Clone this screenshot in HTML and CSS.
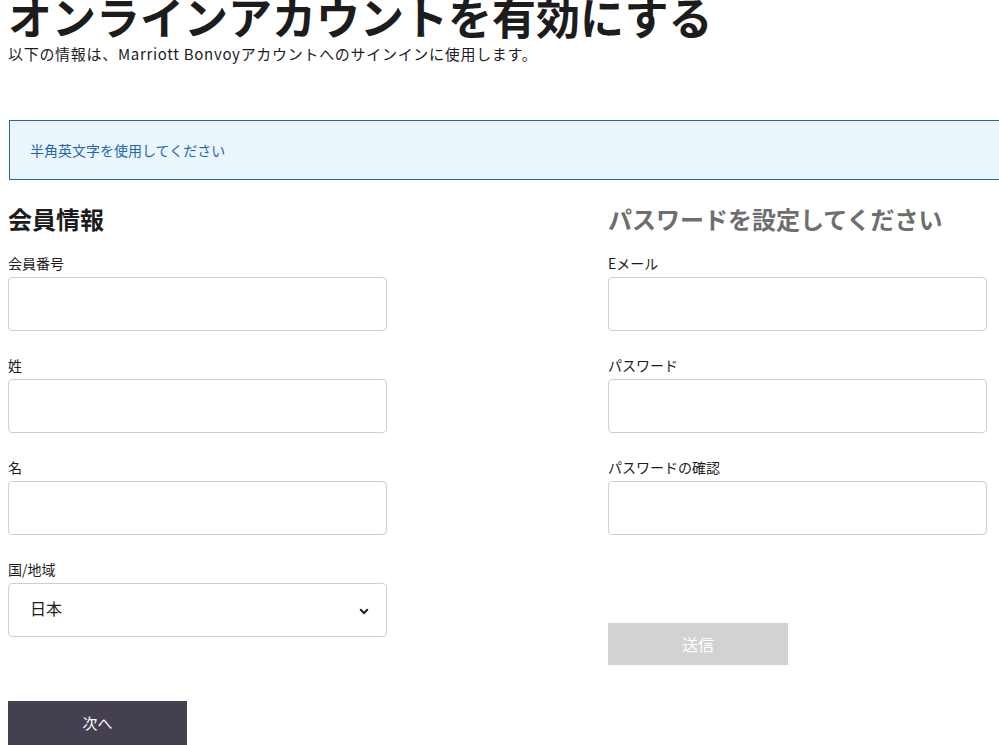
FILE: index.html
```html
<!DOCTYPE html>
<html lang="ja">
<head>
<meta charset="utf-8">
<title>オンラインアカウントを有効にする</title>
<link rel="stylesheet" href="styles.css">
</head>
<body>
<div class="page">
  <h1 class="title">オンラインアカウントを有効にする</h1>
  <p class="subtitle">以下の情報は、Marriott Bonvoyアカウントへのサインインに使用します。</p>

  <div class="notice">半角英文字を使用してください</div>

  <div class="columns">
    <section class="col">
      <h2 class="col-title">会員情報</h2>
      <div class="field">
        <label class="label">会員番号</label>
        <input class="input" type="text">
      </div>
      <div class="field">
        <label class="label">姓</label>
        <input class="input" type="text">
      </div>
      <div class="field">
        <label class="label">名</label>
        <input class="input" type="text">
      </div>
      <div class="field">
        <label class="label">国/地域</label>
        <div class="input select">
          <span>日本</span>
          <svg class="chevron" width="10" height="7" viewBox="0 0 10 7"><path d="M1.2 1.3 L5 5 L8.8 1.3" fill="none" stroke="#222" stroke-width="2"/></svg>
        </div>
      </div>
      <button class="btn btn-next">次へ</button>
    </section>
    <section class="col">
      <h2 class="col-title muted">パスワードを設定してください</h2>
      <div class="field">
        <label class="label">Eメール</label>
        <input class="input" type="text">
      </div>
      <div class="field">
        <label class="label">パスワード</label>
        <input class="input" type="password">
      </div>
      <div class="field">
        <label class="label">パスワードの確認</label>
        <input class="input" type="password">
      </div>
      <button class="btn btn-submit">送信</button>
    </section>
  </div>
</div>
</body>
</html>
```

FILE: styles.css
```css
html, body {
  margin: 0;
  padding: 0;
  overflow: hidden;
  background: #fff;
}
body {
  font-family: "Noto Sans CJK JP", "Liberation Sans", sans-serif;
  color: #1c1c1c;
}
.page {
  width: 1200px;
  padding: 0 8px;
}
.title {
  margin: -6px 0 0;
  font-size: 44px;
  line-height: 44px;
  font-weight: 700;
  letter-spacing: 0;
  color: #1c1c1c;
}
.subtitle {
  margin: 6px 0 0;
  font-size: 15px;
  line-height: 20px;
  letter-spacing: 0.7px;
  color: #1c1c1c;
}
.notice {
  margin: 56px 0 0 1px;
  height: 58px;
  border: 1px solid #1a69b5;
  background: #eaf5fc;
  color: #1f68b0;
  font-size: 14px;
  display: flex;
  align-items: center;
  padding-left: 20px;
}
.columns {
  display: grid;
  grid-template-columns: 600px 600px;
  margin-top: 24px;
}
.col {
  display: flex;
  flex-direction: column;
  align-items: flex-start;
}
.col-title {
  margin: 0 0 20px;
  font-size: 24px;
  line-height: 30px;
  font-weight: 700;
  color: #1c1c1c;
}
.col-title.muted {
  color: #6e6e6e;
}
.field {
  display: flex;
  flex-direction: column;
  gap: 5px;
  margin-bottom: 25px;
}
.label {
  font-size: 14px;
  line-height: 18px;
  color: #1c1c1c;
}
.input {
  box-sizing: border-box;
  width: 379px;
  height: 54px;
  margin: 0;
  border: 1px solid #cfcfcf;
  border-radius: 4px;
  background: #fff;
  font-family: inherit;
  font-size: 16px;
  padding: 0 21px;
}
.select {
  display: flex;
  align-items: center;
  justify-content: space-between;
  color: #1c1c1c;
  padding: 0 17px 0 21px;
}
.select span {
  margin-top: -4px;
}
.chevron {
  display: block;
  margin-top: 2px;
}
.btn {
  border: 0;
  border-radius: 0;
  font-family: inherit;
  color: #fff;
  height: 42px;
  padding: 0;
  cursor: pointer;
}
.btn-next {
  margin-top: 39px;
  width: 179px;
  height: 44px;
  background: #45404f;
  font-size: 15px;
  padding-bottom: 2px;
}
.btn-submit {
  margin-top: 63px;
  width: 180px;
  background: #d2d2d2;
  font-size: 16px;
}
```
